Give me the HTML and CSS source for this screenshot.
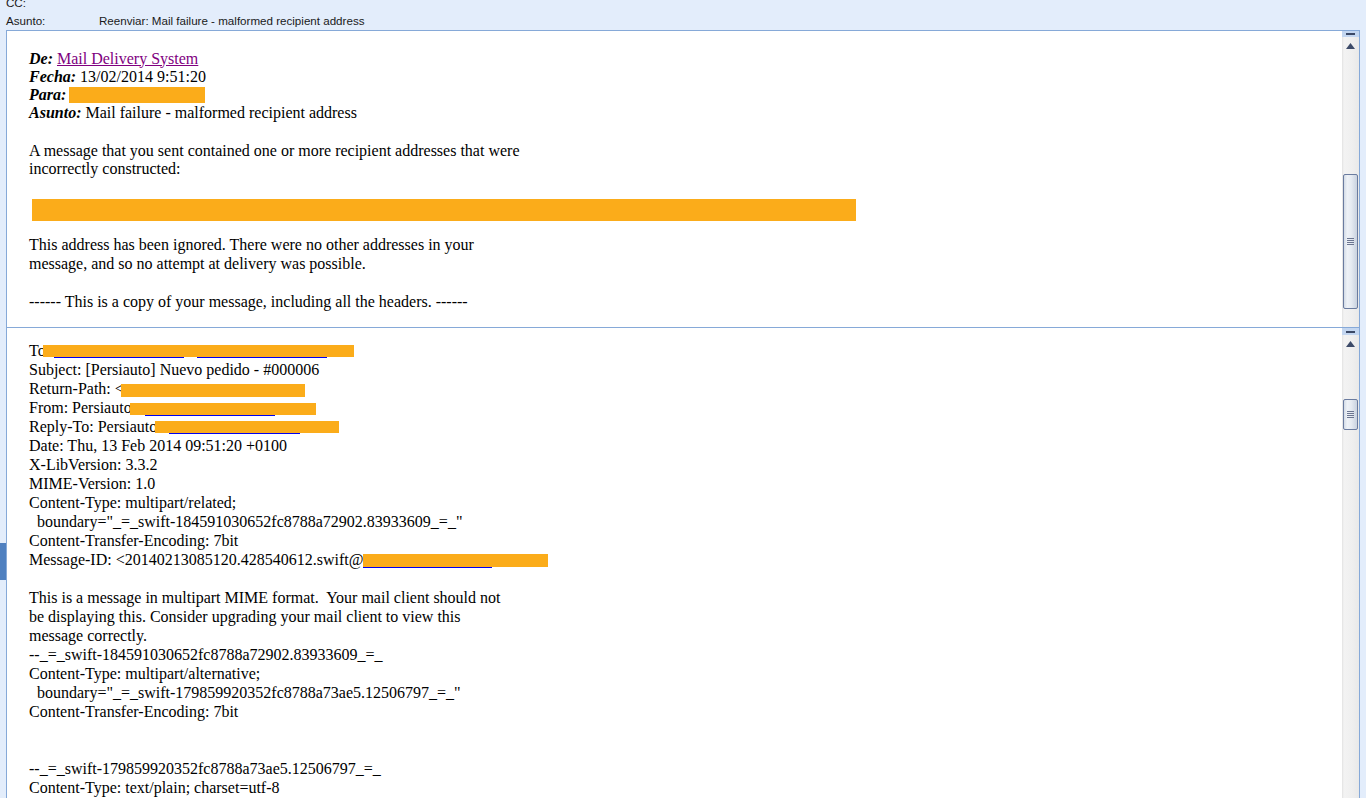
FILE: index.html
```html
<!DOCTYPE html>
<html>
<head>
<meta charset="utf-8">
<title>Reenviar: Mail failure - malformed recipient address</title>
<link rel="stylesheet" href="styles.css">
</head>
<body>
<div class="hdr">
  <div class="hrow"><span class="hl">CC:</span></div>
  <div class="hrow"><span class="hl">Asunto:</span><span class="hv">Reenviar: Mail failure - malformed recipient address</span></div>
</div>

<div class="pane pane1">
  <div class="body b1">
    <div class="blk blk1">
      <div><b><i>De:</i></b> <a class="lnk" href="#">Mail Delivery System</a></div>
      <div><b><i>Fecha:</i></b> 13/02/2014 9:51:20</div>
      <div><b><i>Para:</i></b> <span class="bar bar-para"></span></div>
      <div><b><i>Asunto:</i></b> Mail failure - malformed recipient address</div>
    </div>
    <div class="blk blk2">
      <div>A message that you sent contained one or more recipient addresses that were</div>
      <div>incorrectly constructed:</div>
    </div>
    <div class="bigbar"></div>
    <div class="blk blk3">
      <div>This address has been ignored. There were no other addresses in your</div>
      <div>message, and so no attempt at delivery was possible.</div>
    </div>
    <div class="blk blk4">
      <div>------ This is a copy of your message, including all the headers. ------</div>
    </div>
  </div>
  <div class="sb">
    <div class="split"><i></i></div>
    <div class="up"><svg width="9" height="6" viewBox="0 0 9 6"><path d="M4.5 0 L9 6 L0 6 Z" fill="#3d4b69"/></svg></div>
    <div class="track"><div class="thumb thumb1"><i></i><i></i><i></i><i></i></div></div>
  </div>
</div>

<div class="pane pane2">
  <div class="body b2">
    <div class="ln">To<span class="bar bar-to"></span></div>
    <div class="ln">Subject: [Persiauto] Nuevo pedido - #000006</div>
    <div class="ln">Return-Path: &lt;<span class="bar bar-rp"></span></div>
    <div class="ln">From: Persiauto<span class="bar bar-from"></span></div>
    <div class="ln">Reply-To: Persiauto<span class="bar bar-reply"></span></div>
    <div class="ln">Date: Thu, 13 Feb 2014 09:51:20 +0100</div>
    <div class="ln">X-LibVersion: 3.3.2</div>
    <div class="ln">MIME-Version: 1.0</div>
    <div class="ln">Content-Type: multipart/related;</div>
    <div class="ln">  boundary="_=_swift-184591030652fc8788a72902.83933609_=_"</div>
    <div class="ln">Content-Transfer-Encoding: 7bit</div>
    <div class="ln">Message-ID: &lt;20140213085120.428540612.swift@<span class="bar bar-mid"></span></div>
    <div class="ln"> </div>
    <div class="ln">This is a message in multipart MIME format.  Your mail client should not</div>
    <div class="ln">be displaying this. Consider upgrading your mail client to view this</div>
    <div class="ln">message correctly.</div>
    <div class="ln">--_=_swift-184591030652fc8788a72902.83933609_=_</div>
    <div class="ln">Content-Type: multipart/alternative;</div>
    <div class="ln">  boundary="_=_swift-179859920352fc8788a73ae5.12506797_=_"</div>
    <div class="ln">Content-Transfer-Encoding: 7bit</div>
    <div class="ln"> </div>
    <div class="ln"> </div>
    <div class="ln">--_=_swift-179859920352fc8788a73ae5.12506797_=_</div>
    <div class="ln">Content-Type: text/plain; charset=utf-8</div>
  </div>
  <div class="sb">
    <div class="split split2"><i></i></div>
    <div class="up"><svg width="9" height="6" viewBox="0 0 9 6"><path d="M4.5 0 L9 6 L0 6 Z" fill="#3d4b69"/></svg></div>
    <div class="track"><div class="thumb thumb2"><i></i><i></i><i></i><i></i></div></div>
  </div>
</div>

<div class="sidegrip"></div>
</body>
</html>
```

FILE: styles.css
```css
html, body {
  margin: 0;
  padding: 0;
}
body {
  background: #e3edfb;
  width: 1366px;
  height: 798px;
  overflow: hidden;
  position: relative;
  font-family: "Liberation Serif", "Times New Roman", serif;
}

/* header rows */
.hdr {
  margin-top: -6px;
  padding-left: 6px;
  font-family: "Liberation Sans", Arial, sans-serif;
  font-size: 11.6px;
  color: #1a1a1a;
}
.hrow {
  height: 17.5px;
  line-height: 17.5px;
  display: flex;
  white-space: nowrap;
}
.hl {
  width: 93px;
  flex: none;
}

/* panes */
.pane {
  margin-left: 6px;
  width: 1354px;
  box-sizing: border-box;
  background: #ffffff;
  display: flex;
  overflow: hidden;
}
.pane1 {
  margin-top: 1px;
  height: 298px;
  border: 1px solid #86a9d8;
}
.pane2 {
  height: 470px;
  border-left: 1px solid #86a9d8;
  border-right: 1px solid #86a9d8;
}
.body {
  flex: 1;
  min-width: 0;
  padding-left: 22px;
  font-size: 16px;
  color: #000;
  white-space: nowrap;
}
.b1 {
  padding-top: 18.6px;
}
.blk1 div { height: 18px; line-height: 18px; }
.blk2 { margin-top: 20px; }
.blk2 div { height: 18px; line-height: 18px; }
.blk3 { margin-top: 14.1px; }
.blk3 div { height: 19px; line-height: 19px; }
.blk4 { margin-top: 19.5px; }
.blk4 div { height: 18px; line-height: 18px; }

.lnk {
  color: #800080;
  text-decoration: underline;
}

.bar {
  display: inline-block;
  background: #fbac1a;
}
.bar-para {
  width: 136px;
  height: 16px;
  margin-left: -1px;
  vertical-align: -3px;
}
.bigbar {
  margin-top: 21.4px;
  margin-left: 3px;
  width: 824px;
  height: 22px;
  background: #fbac1a;
}

.b2 {
  padding-top: 13px;
}
.ln {
  height: 19px;
  line-height: 19px;
  white-space: pre;
}
.bar-to {
  width: 311px;
  height: 13px;
  margin-left: -3px;
  vertical-align: -2px;
  background:
    linear-gradient(#fbac1a, #fbac1a) 0 0 / 100% 12px no-repeat,
    linear-gradient(#0000ee, #0000ee) 11px 12px / 130px 1px no-repeat,
    linear-gradient(#0000ee, #0000ee) 154px 12px / 130px 1px no-repeat;
}
.bar-rp {
  width: 184px;
  height: 13px;
  margin-left: -3px;
  vertical-align: -3px;
}
.bar-from {
  width: 186px;
  height: 13px;
  margin-left: -2px;
  vertical-align: -3px;
  background:
    linear-gradient(#fbac1a, #fbac1a) 0 0 / 100% 12px no-repeat,
    linear-gradient(#0000ee, #0000ee) 15px 12px / 130px 1px no-repeat;
}
.bar-reply {
  width: 184px;
  height: 13px;
  margin-left: -2px;
  vertical-align: -2px;
  background:
    linear-gradient(#fbac1a, #fbac1a) 0 0 / 100% 12px no-repeat,
    linear-gradient(#0000ee, #0000ee) 14px 12px / 131px 1px no-repeat;
}
.bar-mid {
  width: 185px;
  height: 14px;
  margin-left: 0px;
  vertical-align: -3px;
  background:
    linear-gradient(#fbac1a, #fbac1a) 0 0 / 100% 13px no-repeat,
    linear-gradient(#0000ee, #0000ee) 0 13px / 129px 1px no-repeat;
}

/* scrollbars */
.sb {
  width: 17px;
  flex: none;
  display: flex;
  flex-direction: column;
  background: linear-gradient(to right, #e2e2e2 0, #f3f3f3 2px, #efefef 60%, #e9e9e9 100%);
}
.split {
  height: 6px;
  background: #c3d6f0;
  display: flex;
  align-items: center;
  justify-content: center;
}
.split2 {
  height: 7px;
}
.split i {
  display: block;
  width: 9px;
  height: 2px;
  background: #3a4866;
}
.up {
  height: 17px;
  display: flex;
  align-items: center;
  justify-content: center;
}
.up svg { display: block; }
.track {
  flex: 1;
}
.thumb {
  margin-left: 1px;
  width: 15px;
  box-sizing: border-box;
  border: 1px solid #6a7b9f;
  border-radius: 2px;
  background: linear-gradient(to right, #d3dbe6 0, #eef2f7 25%, #e6ebf2 55%, #c9d2df 100%);
  display: flex;
  flex-direction: column;
  align-items: center;
  justify-content: center;
  gap: 1px;
}
.thumb i {
  display: block;
  width: 7px;
  height: 1px;
  background: #6b7590;
}
.thumb1 {
  margin-top: 120px;
  height: 135px;
}
.thumb2 {
  margin-top: 47px;
  height: 31px;
}

.sidegrip {
  position: absolute;
  left: 0;
  top: 543px;
  width: 6px;
  height: 37px;
  background: #4f80c0;
}
```
